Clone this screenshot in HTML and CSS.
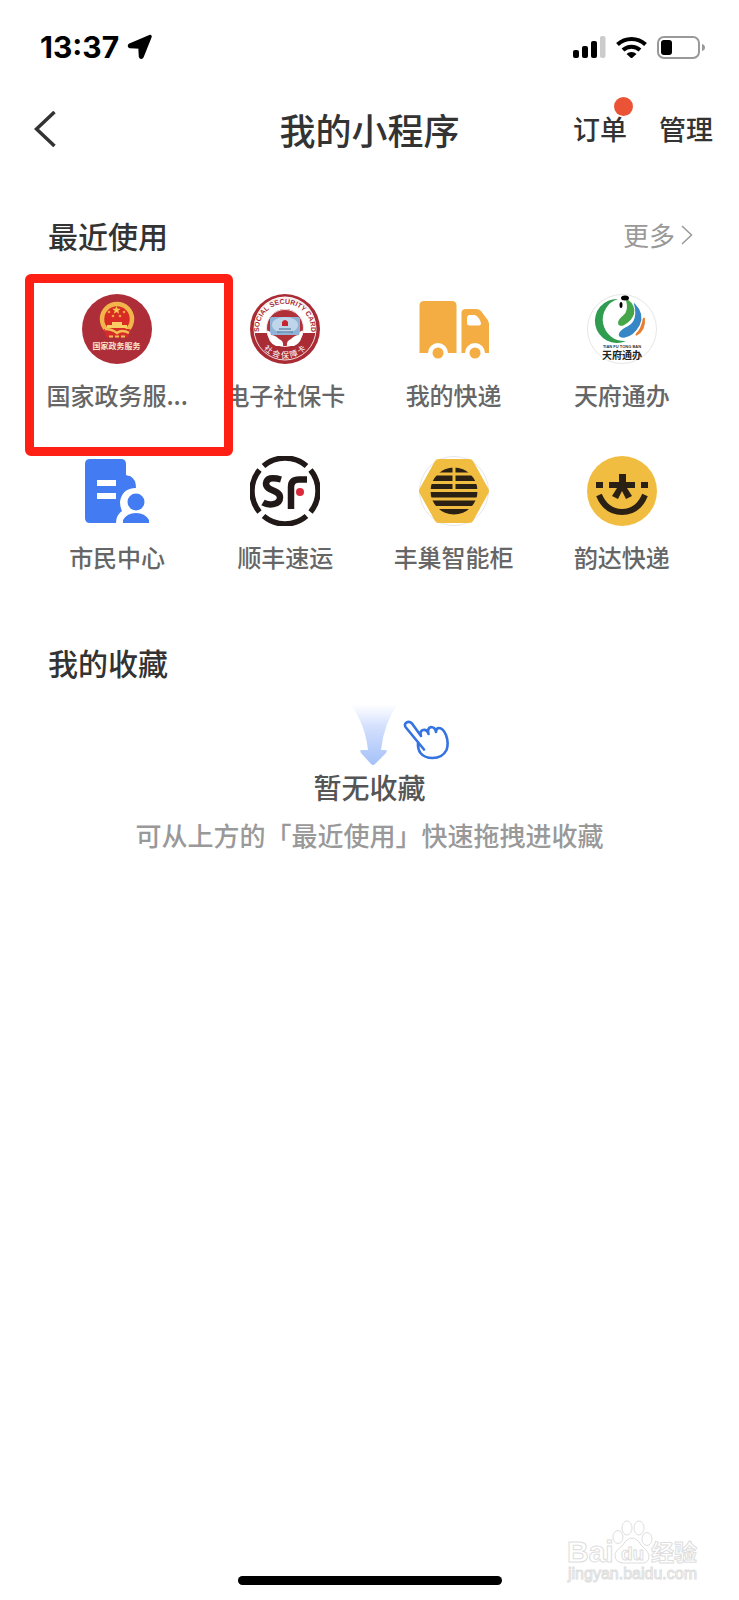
FILE: index.html
```html
<!DOCTYPE html>
<html lang="zh-CN">
<head>
<meta charset="utf-8">
<meta name="viewport" content="width=device-width, initial-scale=1">
<title>我的小程序</title>
<link rel="stylesheet" href="styles.css">
</head>
<body>
<div class="page">
  <div class="status">
    <div class="status-side">
      <span class="time">13:37</span>
      <svg width="26" height="26" viewBox="0 0 26 26"><path d="M23 2.500 15 22.500Q14 24 13.500 22.500L13 13 3 12.500Q2 12 3 11Z" stroke="#000" stroke-width="3.500" stroke-linejoin="round"/></svg>
    </div>
    <div class="status-side status-icons">
      <svg width="33" height="22" viewBox="0 0 33 22"><rect y="14" width="6" height="8" rx="2"/><rect x="9" y="10" width="6" height="12" rx="2"/><rect x="18" y="5" width="6" height="17" rx="2"/><rect x="27" width="5.500" height="22" rx="2" fill="#ccc"/></svg>
      <svg width="31" height="22" viewBox="0 0 31 22"><g fill="none" stroke="#000" stroke-width="4"><path d="M1.500 8.500a20.500 20.500 0 0 1 28 0"/><path d="M7 14a12.500 12.500 0 0 1 17 0"/></g><path d="M10.500 18a7 7 0 0 1 10 0l-5 4.500z"/></svg>
      <svg width="48" height="23" viewBox="0 0 48 23"><rect x="1" y="1" width="41" height="21" rx="6" fill="none" stroke="#999" stroke-width="2"/><rect x="4" y="4" width="11" height="15" rx="3"/><path d="M45 8v7q3-1 3-3.500t-3-3.500z" fill="#999"/></svg>
    </div>
  </div>

  <header class="nav">
    <button class="back" aria-label="返回"><svg width="22" height="36" viewBox="0 0 22 36"><path d="M20.500 1 2.500 18l18 17" fill="none" stroke="#333" stroke-width="3.500"/></svg></button>
    <h1 class="title">我的小程序</h1>
    <div class="actions">
      <button class="action">订单<span class="dot"></span></button>
      <button class="action">管理</button>
    </div>
  </header>

  <main>
    <section class="section">
      <div class="section-head">
        <h2 class="heading">最近使用</h2>
        <a class="more" href="#">更多<svg width="12" height="20" viewBox="0 0 12 20"><path d="m1 1 9.500 9L1 19" fill="none" stroke="#999" stroke-width="1.500"/></svg></a>
      </div>
      <div class="apps">
        <a class="app" href="#">
          <svg class="icon" viewBox="0 0 70 70">
            <circle cx="35" cy="35" r="35" fill="#ad2d38"/>
            <circle cx="35" cy="25" r="15" fill="#d92b25" stroke="#f1b54b" stroke-width="4.500"/>
            <path d="m34.500 12 1.200 2.800h3l-2.400 1.900.9 3-2.700-1.800-2.700 1.800.9-3-2.400-1.900h3z" fill="#f8c74f"/>
            <g fill="#f2a43d"><circle cx="27" cy="18" r="1.300"/><circle cx="42" cy="18" r="1.300"/><circle cx="31" cy="22" r="1.300"/><circle cx="38" cy="22" r="1.300"/></g>
            <path d="M30 28h10v3h5v3H25v-3h5z" fill="#f9cf63"/>
            <path d="M22 35h26l-2 8H24z" fill="#d42c28"/>
            <path d="M23 35q7 0 12 4 5-4 12 0" fill="none" stroke="#f3bd54" stroke-width="2.500"/>
            <path d="M27 42.500h4M33 42.500h4M39 42.500h4" stroke="#f3bd54" stroke-width="2"/>
            <text x="34.500" y="55" class="mark-gov">国家政务服务</text>
          </svg>
          <span class="label">国家政务服...</span>
        </a>
        <a class="app" href="#">
          <svg class="icon" viewBox="0 0 70 70">
            <defs><path id="arc-top" d="M12 48a26 26 0 1 1 46 0"/><path id="arc-low" d="M6 40a29.500 29.500 0 0 0 58 0"/></defs>
            <circle cx="35" cy="35" r="35" fill="#a92b33"/>
            <path d="M4.500 39a31 31 0 1 1 61 0H52a18 18 0 1 0-34 0z" fill="#fff"/>
            <circle cx="35" cy="35" r="31" fill="none" stroke="#f4dede"/>
            <circle cx="35" cy="34" r="18" fill="#b03138"/>
            <circle cx="35" cy="34" r="18.500" fill="none" stroke="#f4dede"/>
            <rect x="20" y="23" width="30" height="18" rx="2" fill="#8eb3d7"/><ellipse cx="35" cy="31" rx="13" ry="8" fill="#bfd6ea"/>
            <path d="M32 28q3-4 6 0v4h-6z" fill="#c8242f"/><path d="M29 35h12M27 38h16" stroke="#42698f"/>
            <path d="M17 37q3-1 4 4 4 0 8 4 5 2 4 7h-7q-8-3-9-15zM53 37q-3-1-4 4-4 0-8 4-5 2-4 7h7q8-3 9-15z" fill="#fff"/>
            <text class="mark-arc"><textPath href="#arc-top" startOffset="50%">SOCIAL SECURITY CARD</textPath></text>
            <text class="mark-low"><textPath href="#arc-low" startOffset="50%">社 会 保 障 卡</textPath></text>
          </svg>
          <span class="label">电子社保卡</span>
        </a>
        <a class="app" href="#">
          <svg class="icon" viewBox="0 0 70 70" fill="#f3ad43">
            <path d="M5 7h28q4.500 0 4.500 4.500V59H29a10 10 0 0 0-20 0H.5V11.500Q.5 7 5 7z"/>
            <path fill-rule="evenodd" d="M47 15h10q3 0 5 2l6 8q2 2 2 5v29h-4a10 10 0 0 0-20 0h-3.500V19q0-4 4.500-4zm4 6q-3 0-3 3v5q0 2.500 3 2.500h8q3 0 3-2 0-2-2-5t-4-3.500z"/>
            <circle cx="19" cy="59" r="5.500"/><circle cx="56" cy="59" r="5.500"/>
          </svg>
          <span class="label">我的快递</span>
        </a>
        <a class="app" href="#">
          <svg class="icon" viewBox="0 0 70 70">
            <circle cx="35" cy="35" r="34.500" fill="#fff" stroke="#e6e6e6"/>
            <path d="M31 5a22 22 0 1 0 8 42A21.500 21.500 0 0 1 31 5z" fill="#2f9c50"/>
            <path d="M40 6q8 6 6 14-2 6-9 10-5 2-5-1 0-3 5-7 6-5 3-16z" fill="#45a64a" stroke="#45a64a" stroke-width="2"/>
            <path d="M48 11q9 9 4 20-6 11-15 12-6 0-4-4 2-3 8-6 11-6 7-22z" fill="#3786c6" stroke="#3786c6" stroke-width="1.500"/>
            <path d="M57 24q1 12-8 17 6-5 8-17z" fill="#e67f31" stroke="#e67f31" stroke-width="2"/>
            <ellipse cx="38" cy="4" rx="4" ry="2.500"/><ellipse cx="34" cy="11" rx="1.500" ry="3"/>
            <text x="35" y="54" class="mark-tf-en">TIAN FU TONG BAN</text>
            <text x="35" y="65" class="mark-tf">天府通办</text>
          </svg>
          <span class="label">天府通办</span>
        </a>
        <a class="app" href="#">
          <svg class="icon" viewBox="0 0 70 70" fill="#437cf2">
            <path d="M8 3h31q5 0 5 5v11q2 1 4 1 6 3 6 12-14 0-16 14 0 5 2 9-6 4-6 12H8q-5 0-5-5V8q0-5 5-5z"/>
            <path d="M15 24h19v6H15zM15 37h19v6H15z" fill="#fff"/>
            <circle cx="54" cy="46" r="8.500"/><path d="M41 67v-3q4-7 13-7t13 7v3z"/>
          </svg>
          <span class="label">市民中心</span>
        </a>
        <a class="app" href="#">
          <svg class="icon" viewBox="0 0 70 70">
            <g fill="none" stroke="#211917" stroke-width="5.500"><path d="M13.500 10a33 33 0 0 1 43 0M13.500 60a33 33 0 0 0 43 0M9.500 14a33 33 0 0 0 0 42M60.500 14a33 33 0 0 1 0 42"/></g>
            <path d="M31 23.500q-14-4-15 4c0 8 14 6 14 14 0 8-12 8-17 5" fill="none" stroke="#211917" stroke-width="6.500"/>
            <path d="M41 53V31q0-7.500 8-7.500h8" fill="none" stroke="#211917" stroke-width="6.500"/>
            <circle cx="50" cy="36" r="4" fill="#d82a3b"/>
          </svg>
          <span class="label">顺丰速运</span>
        </a>
        <a class="app" href="#">
          <svg class="icon" viewBox="0 0 70 70">
            <defs><clipPath id="hive"><circle cx="35" cy="35" r="23.500"/></clipPath></defs>
            <circle cx="35" cy="35" r="34.500" fill="#fff" stroke="#e6e6e6"/>
            <path d="M20 3h30q3 0 4 2l15 27q2 3 0 6L54 65q-1 2-4 2H20q-3 0-4-2L1 38q-2-3 0-6L16 5q1-2 4-2z" fill="#f0bd40"/>
            <g clip-path="url(#hive)"><path d="M10 11h23.500v5.500H10zM36.500 11H60v5.500H36.500zM10 19.500h23.500V25H10zM36.500 19.500H60V25H36.500zM10 28h23.500v5H10zM36.500 28H60v5H36.500zM10 36h50v5.500H10zM10 44.500h50V50H10zM10 53h50v6H10z" fill="#2a2013"/></g>
          </svg>
          <span class="label">丰巢智能柜</span>
        </a>
        <a class="app" href="#">
          <svg class="icon" viewBox="0 0 70 70">
            <circle cx="35" cy="35" r="35" fill="#f0bd40"/>
            <g fill="#2a2013"><path d="M9 26h7v6H9zM54 26h7v6h-7zM32 18h7v8h9v6h-8l5 8-6 3-4-8-4 8-6-3 5-8h-8v-6h10z"/></g>
            <path d="M12 39q7 17 23 17t23-17" fill="none" stroke="#2a2013" stroke-width="6"/>
          </svg>
          <span class="label">韵达快递</span>
        </a>
        <div class="highlight"></div>
      </div>
    </section>

    <section class="section">
      <div class="section-head"><h2 class="heading">我的收藏</h2></div>
      <div class="empty">
        <svg class="empty-art" width="100" height="62" viewBox="0 0 100 62">
          <defs><linearGradient id="fade" x1="0" y1="0" x2="0" y2="1"><stop offset="0" stop-color="#dbe6ff" stop-opacity="0"/><stop offset=".35" stop-color="#d5e1fd"/><stop offset="1" stop-color="#a5c1f8"/></linearGradient></defs>
          <path d="M0 0h48Q34 19 31 46h4q3 0 1 3L25 60q-2 2-4 0L11 49q-2-3 1-3h6Q15 19 0 0z" fill="url(#fade)"/>
          <path d="M74 45.500 55.500 23q-1.500-3 1-4.500 3-1.500 5.500 1l9 12.500q-1.500-5 2-6 4-1 5.500 4-1.500-6 2.500-7 4 0 5 5 0-4 3-4 4 0 7 7 3 8 .5 15-4 8-14 8-8 0-12-5-3-4-2.500-11" fill="none" stroke="#3574e0" stroke-width="2.600" stroke-linecap="round" stroke-linejoin="round"/>
        </svg>
        <p class="empty-title">暂无收藏</p>
        <p class="empty-hint">可从上方的「最近使用」快速拖拽进收藏</p>
      </div>
    </section>
  </main>

  <footer class="footer">
    <svg class="watermark" width="136" height="62" viewBox="0 0 136 62">
      <g fill="#fff" stroke="#dedede">
        <text x="0" y="42" class="wm-big">Bai</text>
        <ellipse cx="51" cy="17" rx="5" ry="6.500"/><ellipse cx="60" cy="8" rx="5" ry="7"/><ellipse cx="72" cy="8" rx="5" ry="7"/><ellipse cx="80" cy="19" rx="5" ry="6.500"/>
        <path d="M65 18q5 0 9 7 8 7 8 11 0 8-9 7h-16q-9 0-9-8 0-4 8-10 4-7 9-7z"/>
        <text x="54" y="40" class="wm-du">du</text>
        <text x="84" y="41" class="wm-cn">经验</text>
        <text x="1" y="59" class="wm-url">jingyan.baidu.com</text>
      </g>
    </svg>
    <div class="home-bar"></div>
  </footer>
</div>
</body>
</html>
```
FILE: styles.css
```css
* { box-sizing: border-box; }

body {
  margin: 0;
  background: #fff;
  color: #333;
  font-family: "Noto Sans CJK SC", sans-serif;
}

h1, h2, p { margin: 0; font-weight: 500; }
a { color: inherit; text-decoration: none; }
button { padding: 0; border: 0; background: none; color: inherit; font: inherit; cursor: pointer; }
svg { display: block; flex: none; }

.page { display: flex; flex-direction: column; min-height: 100vh; }
main { flex: 1; }

.status {
  display: flex;
  justify-content: space-between;
  align-items: center;
  padding: 29px 34px 0 40px;
}
.status-side { display: flex; align-items: center; gap: 8px; }
.status-icons { gap: 10px; }
.time { color: #000; font: 700 30px/36px Inter, sans-serif; }

.nav {
  display: grid;
  grid-template-columns: 1fr auto 1fr;
  align-items: center;
  padding: 38px 26px 0;
}
.back { justify-self: start; padding-left: 8px; }
.title { font-size: 36px; line-height: 52px; }
.actions { display: flex; justify-content: flex-end; gap: 32px; }
.action { position: relative; font-size: 27px; font-weight: 500; line-height: 40px; }
.dot {
  position: absolute;
  top: -12px;
  right: -6px;
  width: 19px;
  height: 19px;
  border-radius: 50%;
  background: #ea5336;
}

.section-head {
  display: flex;
  justify-content: space-between;
  align-items: center;
  padding: 58px 46px 0 48px;
}
.heading { font-size: 30px; line-height: 44px; }
.more { display: flex; align-items: center; gap: 6px; color: #999; font-size: 26px; line-height: 40px; }

.apps {
  position: relative;
  display: grid;
  grid-template-columns: repeat(4, 1fr);
  row-gap: 42px;
  padding: 37px 33px 6px;
}
.app { display: flex; flex-direction: column; align-items: center; gap: 12px; }
.icon { width: 70px; height: 70px; }
.label {
  color: #666;
  font-size: 24px;
  font-weight: 500;
  line-height: 38px;
  white-space: nowrap;
}
.highlight {
  position: absolute;
  top: 17px;
  left: 25px;
  width: 208px;
  height: 182px;
  border: 9px solid #ff2015;
  border-radius: 6px;
}

.mark-gov { fill: #fbe3c4; font-size: 8px; font-weight: 700; text-anchor: middle; }
.mark-arc { fill: #a92b33; font: 700 7px "Liberation Sans Narrow", "Liberation Sans", sans-serif; text-anchor: middle; }
.mark-low { fill: #fff; font-size: 8px; text-anchor: middle; }
.mark-tf-en { fill: #333; font: 700 4px "Liberation Sans", sans-serif; text-anchor: middle; }
.mark-tf { fill: #222; font-size: 10px; font-weight: 700; text-anchor: middle; }

.empty { display: flex; flex-direction: column; align-items: center; padding-top: 20px; }
.empty-art { margin-left: 60px; }
.empty-title { color: #555; font-size: 28px; line-height: 42px; }
.empty-hint { padding-top: 8px; color: #999; font-size: 26px; font-weight: 500; line-height: 38px; }

.footer { display: flex; flex-direction: column; align-items: center; padding-bottom: 15px; }
.watermark { align-self: flex-end; margin: 0 36px -6px 0; overflow: visible; }
.home-bar { width: 264px; height: 9px; border-radius: 5px; background: #000; }

.wm-big { font: 700 30px "Liberation Sans", sans-serif; }
.wm-du { font: 700 19px "Liberation Sans", sans-serif; }
.wm-cn { font-size: 23px; font-weight: 700; }
.wm-url { font: 400 16px "Liberation Sans", sans-serif; }
```
